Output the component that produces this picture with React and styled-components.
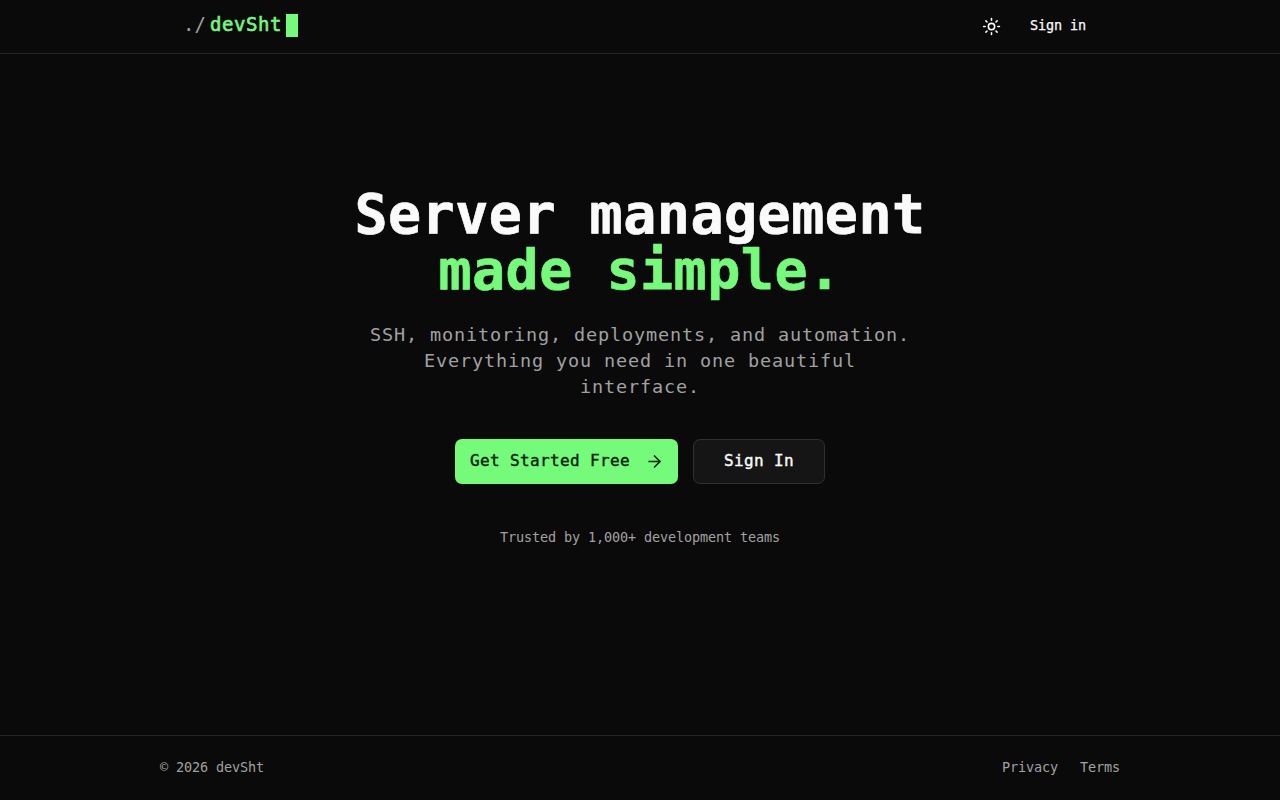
import React from 'react';
import styled, { createGlobalStyle } from 'styled-components';
import { ArrowRight, Sun } from 'lucide-react';

const App = () => {
  return (
    <>
      <GlobalStyle />
      <Page>
        <Header>
          <Nav>
            <Logo>
              <Prompt>./</Prompt>
              <Name>devSht</Name>
              <Cursor />
            </Logo>
            <Actions>
              <ThemeButton aria-label="Toggle theme">
                <Sun size={19} />
              </ThemeButton>
              <NavLink href="#">Sign in</NavLink>
            </Actions>
          </Nav>
        </Header>
        <Hero>
          <Title>
            Server management
            <Accent>made simple.</Accent>
          </Title>
          <Subtitle>
            SSH, monitoring, deployments, and automation. Everything you need in
            one beautiful interface.
          </Subtitle>
          <Buttons>
            <Button href="#" $primary>
              <Label>Get Started Free</Label>
              <ArrowRight size={19} />
            </Button>
            <Button href="#">
              <Label>Sign In</Label>
            </Button>
          </Buttons>
          <Trusted>Trusted by 1,000+ development teams</Trusted>
        </Hero>
        <Footer>
          <FooterInner>
            <span>© 2026 devSht</span>
            <Links>
              <FooterLink href="#">Privacy</FooterLink>
              <FooterLink href="#">Terms</FooterLink>
            </Links>
          </FooterInner>
        </Footer>
      </Page>
    </>
  );
};

const GlobalStyle = createGlobalStyle`
  * {
    box-sizing: border-box;
  }
  body {
    margin: 0;
    background-color: #0a0a0a;
    color: #fafafa;
    font-family: 'DejaVu Sans Mono', monospace;
  }
  a {
    color: inherit;
    text-decoration: none;
  }
`;
const Page = styled.div`
  display: flex;
  flex-direction: column;
  height: 100vh;
  overflow: hidden;
`;
const Header = styled.header`
  height: 54px;
  border-bottom: 1px solid #262626;
`;
const Nav = styled.nav`
  display: flex;
  justify-content: space-between;
  width: 960px;
  height: 53px;
  margin: 0 auto;
  padding: 0 34px 0 23px;
`;
const Logo = styled.div`
  display: flex;
  align-items: flex-start;
  padding-top: 14px;
  font-size: 19px;
  line-height: 21px;
`;
const Prompt = styled.span`
  width: 27px;
  color: #a1a1a1;
  letter-spacing: 0.1px;
`;
const Name = styled.span`
  width: 72px;
  color: #73fb79;
  letter-spacing: 0.56px;
  -webkit-text-stroke: 0.6px #73fb79;
`;
const Cursor = styled.span`
  width: 12px;
  height: 23px;
  margin-left: 4px;
  background-color: #73fb79;
`;
const Actions = styled.div`
  display: flex;
  align-items: center;
  gap: 29px;
`;
const ThemeButton = styled.button`
  display: flex;
  padding: 0;
  border: 0;
  background: none;
  color: #fafafa;
`;
const NavLink = styled.a`
  font-size: 13.5px;
  line-height: 18px;
  letter-spacing: -0.13px;
  padding-bottom: 3px;
  -webkit-text-stroke: 0.25px #fafafa;
`;
const Hero = styled.main`
  display: flex;
  flex: 1;
  flex-direction: column;
  align-items: center;
  padding-top: 132px;
`;
const Title = styled.h1`
  margin: 0;
  font-size: 55px;
  font-weight: 700;
  line-height: 56px;
  letter-spacing: 0.49px;
  text-align: center;
  -webkit-text-stroke: 0.7px currentColor;
`;
const Accent = styled.span`
  display: block;
  color: #73fb79;
`;
const Subtitle = styled.p`
  width: 556px;
  margin: 24px 0 0;
  color: #a1a1a1;
  font-size: 18.5px;
  line-height: 26px;
  letter-spacing: 0.86px;
  text-align: center;
`;
const Buttons = styled.div`
  display: flex;
  gap: 15px;
  margin-top: 39px;
`;
const Button = styled.a`
  display: flex;
  align-items: center;
  justify-content: ${({ $primary }) => ($primary ? 'space-between' : 'center')};
  width: ${({ $primary }) => ($primary ? '223px' : '132px')};
  height: 45px;
  padding: ${({ $primary }) => ($primary ? '0 14px 0 15px' : '0 15px')};
  border: ${({ $primary }) => ($primary ? '0' : '1px solid #303030')};
  border-radius: 7px;
  background-color: ${({ $primary }) => ($primary ? '#73fb79' : '#151515')};
  color: ${({ $primary }) => ($primary ? '#06200b' : '#fafafa')};
`;
const Label = styled.span`
  padding-bottom: 2px;
  font-size: 16px;
  line-height: 22px;
  letter-spacing: 0.37px;
  -webkit-text-stroke: 0.4px currentColor;
`;
const Trusted = styled.p`
  margin: 44px 0 0;
  color: #a1a1a1;
  font-size: 13.5px;
  line-height: 19px;
  letter-spacing: -0.13px;
`;
const Footer = styled.footer`
  height: 65px;
  border-top: 1px solid #262626;
`;
const FooterInner = styled.div`
  display: flex;
  align-items: center;
  justify-content: space-between;
  width: 960px;
  height: 62px;
  margin: 0 auto;
  color: #a1a1a1;
  font-size: 13.5px;
  letter-spacing: -0.13px;
`;
const Links = styled.div`
  display: flex;
  gap: 22px;
`;
const FooterLink = styled.a`
  color: #a1a1a1;
`;

export default App;
